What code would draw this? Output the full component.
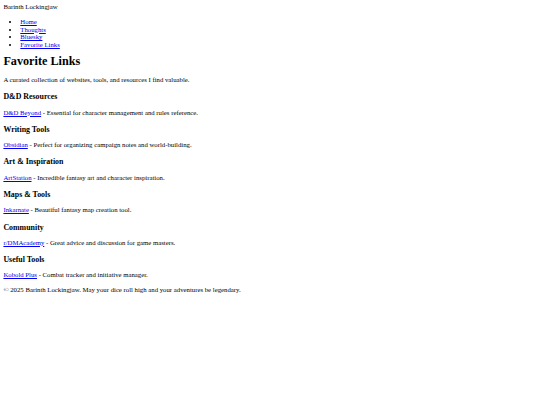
const navLinks = ["Home", "Thoughts", "Bluesky", "Favorite Links"]

const sections = [
    { title: "D&D Resources", link: "D&D Beyond", text: "Essential for character management and rules reference." },
    { title: "Writing Tools", link: "Obsidian", text: "Perfect for organizing campaign notes and world-building." },
    { title: "Art & Inspiration", link: "ArtStation", text: "Incredible fantasy art and character inspiration." },
    { title: "Maps & Tools", link: "Inkarnate", text: "Beautiful fantasy map creation tool." },
    { title: "Community", link: "r/DMAcademy", text: "Great advice and discussion for game masters." },
    { title: "Useful Tools", link: "Kobold Plus", text: "Combat tracker and initiative manager." },
]

const linkClass = "text-[#0000ee] underline"

export default function App() {
    return (
        <div className="m-[3.4px] font-['Liberation_Serif',serif] text-[6.75px] leading-[1.14] text-black">
            <header>
                <div>Barinth Lockingjaw</div>
                <nav>
                    <ul className="my-[6.75px] pl-[16.9px] list-disc">
                        {navLinks.map((l) => (
                            <li key={l}>
                                <a href="#" className={linkClass}>{l}</a>
                            </li>
                        ))}
                    </ul>
                </nav>
            </header>

            <main>
                <h1 className="text-[12.2px] font-bold my-[6.5px]">Favorite Links</h1>
                <p className="my-[6.75px]">A curated collection of websites, tools, and resources I find valuable.</p>

                {sections.map((s) => (
                    <section key={s.title}>
                        <h3 className="text-[7.9px] font-bold mt-[8.7px] mb-[7.2px]">{s.title}</h3>
                        <p className="my-[6.75px]">
                            <a href="#" className={linkClass}>{s.link}</a> - {s.text}
                        </p>
                    </section>
                ))}
            </main>

            <footer>
                <p className="mt-[7.3px] mb-[6.75px]">© 2025 Barinth Lockingjaw. May your dice roll high and your adventures be legendary.</p>
            </footer>
        </div>
    )
}
